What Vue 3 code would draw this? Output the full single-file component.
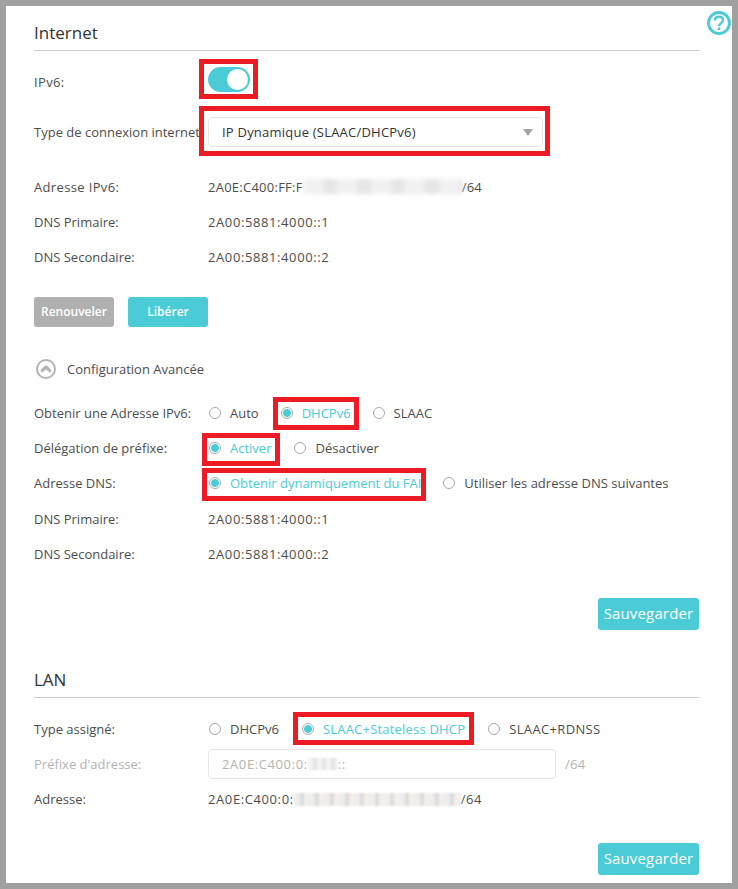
<script setup>
const info = [
  { label: 'DNS Primaire:', value: '2A00:5881:4000::1' },
  { label: 'DNS Secondaire:', value: '2A00:5881:4000::2' },
]
</script>

<template>
  <div class="frame">
    <svg class="help" viewBox="0 0 24 24" width="24" height="24" aria-label="Aide">
      <circle cx="12" cy="12" r="10.5" fill="none" stroke="#4acbd6" stroke-width="2.8" />
      <path d="M8 9.6C8 7.1 9.8 5.8 12 5.8s4 1.3 4 3.4c0 1.7-1 2.4-2.2 3.2-1.1.7-1.8 1.3-1.8 2.6" fill="none" stroke="#4acbd6" stroke-width="2.4" />
      <rect x="10.7" y="16.4" width="2.6" height="2.6" fill="#4acbd6" />
    </svg>

    <h2 class="title first">Internet</h2>

    <div class="row toggle-row">
      <span class="label wide">IPv6:</span>
      <span class="toggle mark m-toggle"><span class="knob"></span></span>
    </div>

    <div class="row select-row">
      <span class="label">Type de connexion internet</span>
      <div class="select mark m-select">
        <span>IP Dynamique (SLAAC/DHCPv6)</span>
        <span class="caret"></span>
      </div>
    </div>

    <div class="info-block">
      <div class="row line">
        <span class="label wide">Adresse IPv6:</span>
        <span class="value tight">2A0E:C400:FF:F<span class="smudge s-wan"></span>/64</span>
      </div>
      <div v-for="item in info" :key="item.label" class="row line">
        <span class="label">{{ item.label }}</span>
        <span class="value">{{ item.value }}</span>
      </div>
    </div>

    <div class="buttons">
      <button class="btn grey">Renouveler</button>
      <button class="btn teal">Libérer</button>
    </div>

    <div class="advanced">
      <svg viewBox="0 0 20 20" width="20" height="20">
        <circle cx="10" cy="10" r="9" fill="none" stroke="#b4b4b4" stroke-width="2" />
        <path d="M6.2 11.6 10 8l3.8 3.6" fill="none" stroke="#b4b4b4" stroke-width="3.2" stroke-linecap="round" stroke-linejoin="round" />
      </svg>
      <span>Configuration Avancée</span>
    </div>

    <div class="radio-block">
      <div class="row tall">
        <span class="label">Obtenir une Adresse IPv6:</span>
        <div class="radios">
          <span class="radio"><i class="dot"></i>Auto</span>
          <span class="radio on mark m-dhcp"><i class="dot"></i>DHCPv6</span>
          <span class="radio"><i class="dot"></i>SLAAC</span>
        </div>
      </div>
      <div class="row short">
        <span class="label">Délégation de préfixe:</span>
        <div class="radios loose">
          <span class="radio on mark m-activer"><i class="dot"></i>Activer</span>
          <span class="radio"><i class="dot"></i>Désactiver</span>
        </div>
      </div>
      <div class="row tall">
        <span class="label">Adresse DNS:</span>
        <div class="radios">
          <span class="radio on mark m-fai"><i class="dot"></i>Obtenir dynamiquement du FAI</span>
          <span class="radio"><i class="dot"></i>Utiliser les adresse DNS suivantes</span>
        </div>
      </div>
      <div v-for="item in info" :key="'adv' + item.label" class="row line">
        <span class="label">{{ item.label }}</span>
        <span class="value">{{ item.value }}</span>
      </div>
    </div>

    <div class="save-row save-one"><button class="btn teal save">Sauvegarder</button></div>

    <h2 class="title lan">LAN</h2>

    <div class="row lan-type">
      <span class="label">Type assigné:</span>
      <div class="radios loose">
        <span class="radio"><i class="dot"></i>DHCPv6</span>
        <span class="radio on mark m-stateless spaced"><i class="dot"></i>SLAAC+Stateless DHCP</span>
        <span class="radio spaced-more"><i class="dot"></i>SLAAC+RDNSS</span>
      </div>
    </div>

    <div class="row prefix">
      <span class="label muted">Préfixe d'adresse:</span>
      <div class="input">2A0E:C400:0:<span class="smudge s-prefix"></span>::</div>
      <span class="muted suffix">/64</span>
    </div>

    <div class="row address">
      <span class="label">Adresse:</span>
      <span class="value">2A0E:C400:0:<span class="smudge s-lan"></span>/64</span>
    </div>

    <div class="save-row save-two"><button class="btn teal save">Sauvegarder</button></div>
  </div>
</template>

<style>
html, body { margin: 0; background: #fff; }
</style>

<style scoped>
.frame {
  position: relative;
  box-sizing: border-box;
  width: 738px;
  height: 889px;
  border: 6px solid #a0a0a0;
  padding: 0 33px 0 28px;
  background: #fff;
  overflow: hidden;
  font-family: "Open Sans", "Liberation Sans", sans-serif;
  font-size: 13px;
  color: #4d4d4d;
}
.help { position: absolute; top: 5px; right: 1px; }
.title {
  margin: 0;
  height: 34px;
  line-height: 34px;
  border-bottom: 1px solid #cccccc;
  font-size: 17px;
  font-weight: 400;
  color: #333;
}
.first { margin-top: 10px; }
.lan { margin-top: 33px; }
.row { display: flex; align-items: center; }
.label { flex: 0 0 174px; white-space: nowrap; }
.wide { letter-spacing: 0.35px; }
.toggle-row { height: 30px; margin-top: 16px; }
.toggle {
  position: relative;
  align-self: flex-start;
  box-sizing: border-box;
  width: 42px;
  height: 25px;
  border-radius: 13px;
  background: #4acbd6;
}
.knob {
  position: absolute;
  top: 2px;
  right: 2px;
  width: 21px;
  height: 21px;
  border-radius: 50%;
  background: #fff;
}
.select-row { height: 30px; margin-top: 20px; }
.select {
  box-sizing: border-box;
  width: 335px;
  height: 30px;
  padding: 0 9px 0 13px;
  display: flex;
  align-items: center;
  justify-content: space-between;
  border: 1px solid #e6e6e6;
  border-radius: 4px;
  color: #333;
  letter-spacing: 0.22px;
}
.caret {
  width: 0;
  height: 0;
  border-left: 5px solid transparent;
  border-right: 5px solid transparent;
  border-top: 7px solid #a6a6a6;
}
.mark { position: relative; }
.mark::after {
  content: "";
  position: absolute;
  border: 5px solid #ed1c24;
  pointer-events: none;
}
.m-toggle::after { inset: -8px -8px -7px -9px; }
.m-select::after { inset: -12px -8px -10px -10px; }
.m-dhcp::after { inset: -7px -8px -8px -7px; }
.m-activer::after { inset: -6px -9px -9px -6px; }
.m-fai::after { inset: -6px -5px -9px -6px; }
.m-stateless::after { inset: -8px -9px -7px -8px; }
.info-block { margin-top: 22px; }
.line { height: 35px; }
.tall { height: 36px; }
.short { height: 34px; }
.value {
  white-space: nowrap;
  display: flex;
  align-items: center;
  letter-spacing: 0.6px;
}
.tight { letter-spacing: 0.25px; }
.smudge { display: inline-block; height: 15px; filter: blur(2px); }
.s-wan {
  width: 159px;
  background: repeating-linear-gradient(90deg, #f1f1f1 0 20px, #e6e6e6 20px 34px);
}
.s-prefix {
  width: 30px;
  height: 12px;
  filter: blur(1px);
  background: repeating-linear-gradient(90deg, #f2f2f2 0 5px, #e4e4e4 5px 9px);
}
.s-lan {
  width: 167px;
  height: 13px;
  filter: blur(1px);
  background: repeating-linear-gradient(90deg, #eeeeee 0 6px, #dcdcdc 6px 10px, #f4efeb 10px 15px);
}
.buttons { display: flex; gap: 14px; margin-top: 23px; }
.btn {
  box-sizing: border-box;
  width: 80px;
  height: 30px;
  padding: 0 0 1px;
  border: 0;
  border-radius: 3px;
  font: 600 12px "Open Sans", "Liberation Sans", sans-serif;
  color: #fff;
}
.grey { background: #b0b0b0; }
.teal { background: #4acbd6; }
.advanced {
  height: 30px;
  margin-top: 27px;
  padding-left: 2px;
  display: flex;
  align-items: center;
  gap: 11px;
}
.radio-block { margin-top: 11px; }
.radios { display: flex; gap: 21px; }
.radios.loose { gap: 22px; }
.radio { display: inline-flex; align-items: center; gap: 9px; white-space: nowrap; }
.radio.on { color: #4acbd6; }
.spaced { letter-spacing: 0.2px; }
.spaced-more { letter-spacing: 0.35px; }
.dot {
  box-sizing: border-box;
  width: 12px;
  height: 12px;
  margin-left: 1px;
  border: 1px solid #aaa;
  border-radius: 50%;
  background: #fff;
}
.on .dot { background: radial-gradient(circle, #4acbd6 0 3.6px, #fff 4.2px); }
.save-row { display: flex; justify-content: flex-end; }
.save-one { margin-top: 27px; }
.save-two { margin-top: 34px; }
.save { width: 101px; height: 32px; padding-bottom: 2px; font-size: 15px; font-weight: 400; letter-spacing: 0.15px; }
.lan-type { height: 30px; margin-top: 16px; }
.prefix { margin-top: 5px; }
.input {
  box-sizing: border-box;
  width: 348px;
  height: 30px;
  padding: 0 13px;
  display: flex;
  align-items: center;
  border: 1px solid #e6e6e6;
  border-radius: 4px;
  color: #b3b3b3;
  letter-spacing: 0.6px;
}
.muted { color: #b3b3b3; }
.suffix { margin-left: 9px; letter-spacing: 0.3px; }
.address { height: 20px; margin-top: 10px; }
</style>
